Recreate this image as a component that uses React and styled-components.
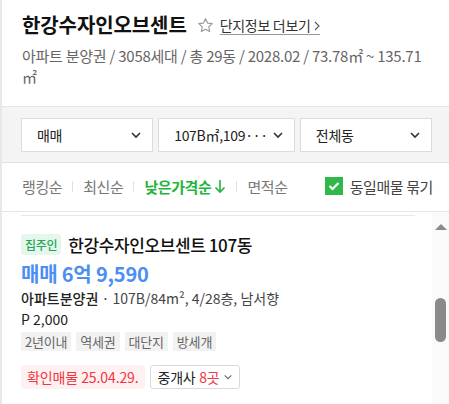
import React from 'react'
import styled, { createGlobalStyle } from 'styled-components'

const GlobalStyle = createGlobalStyle`
  html, body {
    margin: 0;
    padding: 0;
    background: #fff;
  }
  body {
    font-family: "Noto Sans CJK KR", "Noto Sans", sans-serif;
    color: #222;
  }
  * { box-sizing: border-box; }
`

const Page = styled.div`
  width: 449px;
  height: 404px;
  overflow: hidden;
  border-left: 2px solid #e8e8e8;
  display: flex;
  flex-direction: column;
`

const Header = styled.header`
  padding: 10px 20px 0 20px;
  height: 107px;
  border-bottom: 1px solid #e6e6e6;
`

const TitleRow = styled.div`
  display: flex;
  align-items: center;
  gap: 6px;
`

const Title = styled.h2`
  margin: 0;
  font-size: 20px;
  font-weight: 700;
  letter-spacing: -0.1px;
  color: #111;
`

const Star = styled.svg`
  width: 17px;
  height: 17px;
  margin-left: 4px;
  margin-top: 2px;
`

const MoreLink = styled.a`
  font-size: 14px;
  color: #333;
  letter-spacing: -0.3px;
  text-decoration: none;
  border-bottom: 1px solid #999;
  line-height: 17px;
  margin-top: 3px;
  display: flex;
  align-items: center;
  gap: 3px;
`

const Summary = styled.p`
  margin: 6px 0 0;
  font-size: 15px;
  line-height: 21px;
  color: #666;
  letter-spacing: -0.25px;
`

const FilterBar = styled.div`
  background: #f4f4f4;
  border-bottom: 1px solid #e2e2e2;
  padding: 11px 17px 10px 19px;
  display: grid;
  grid-template-columns: repeat(3, 1fr);
  gap: 5px;
`

const Select = styled.div`
  height: 34px;
  background: #fff;
  border: 1px solid #dcdcdc;
  display: flex;
  align-items: center;
  justify-content: space-between;
  gap: 4px;
  padding: 0 10px 0 ${({ $pad }) => $pad}px;
  font-size: 14px;
  color: #222;
  letter-spacing: -0.3px;
  white-space: nowrap;
  span {
    overflow: hidden;
  }
  svg {
    flex-shrink: 0;
  }
`

const SortRow = styled.div`
  height: 48px;
  display: flex;
  align-items: center;
  padding: 0 16px 2px 20px;
`

const SortItem = styled.span`
  font-size: 15px;
  letter-spacing: -0.4px;
  color: ${({ $active }) => ($active ? '#1fb53b' : '#777')};
  font-weight: ${({ $active }) => ($active ? 700 : 400)};
  display: flex;
  align-items: center;
`

const Divider = styled.span`
  width: 1px;
  height: 11px;
  background: #e0e0e0;
  margin: 0 10px;
`

const Bundle = styled.label`
  margin-left: auto;
  display: flex;
  align-items: center;
  gap: 7px;
  font-size: 15px;
  color: #444;
  letter-spacing: -0.4px;
`

const CheckBox = styled.span`
  width: 18px;
  height: 18px;
  background: #30b94a;
  display: flex;
  align-items: center;
  justify-content: center;
`

const ListArea = styled.div`
  flex: 1;
  display: flex;
  border-top: 1px solid #e6e6e6;
`

const ListContent = styled.div`
  flex: 1;
  padding: 3px 17px 0 19px;
`

const PrevEnd = styled.div`
  height: 1px;
  background: #e8e8e8;
`

const Card = styled.div`
  padding-top: 16px;
`

const CardHead = styled.div`
  display: flex;
  align-items: center;
  gap: 7px;
`

const OwnerTag = styled.span`
  background: #e5f6ec;
  color: #26a55a;
  font-size: 12px;
  font-weight: 500;
  border-radius: 3px;
  padding: 0 4px;
  height: 21px;
  display: flex;
  align-items: center;
  letter-spacing: -0.3px;
`

const CardTitle = styled.span`
  font-size: 17px;
  font-weight: 500;
  color: #111;
  letter-spacing: -0.4px;
`

const Price = styled.div`
  margin-top: 4px;
  font-size: 20px;
  font-weight: 700;
  color: #4c8ef1;
  letter-spacing: -0.2px;
  line-height: 26px;
`

const Spec = styled.div`
  font-size: 14px;
  color: #444;
  letter-spacing: 0;
  line-height: 22px;
  b {
    font-weight: 500;
    color: #222;
  }
`

const Premium = styled.div`
  font-size: 14px;
  color: #222;
  line-height: 20px;
  letter-spacing: 0;
`

const Tags = styled.div`
  display: flex;
  gap: 5px;
  margin-top: 3px;
`

const Tag = styled.span`
  background: #f2f2f2;
  color: #666;
  font-size: 13px;
  height: 19px;
  padding: 0 4px;
  display: flex;
  align-items: center;
  letter-spacing: -0.2px;
`

const BottomRow = styled.div`
  display: flex;
  gap: 5px;
  margin-top: 14px;
`

const Confirmed = styled.span`
  background: #fff1f1;
  color: #f2353f;
  font-size: 14px;
  border-radius: 4px;
  height: 24px;
  padding: 0 6px;
  display: flex;
  align-items: center;
  letter-spacing: -0.1px;
`

const Agents = styled.span`
  border: 1px solid #d9d9d9;
  border-radius: 3px;
  height: 24px;
  padding: 0 6px 0 7px;
  display: flex;
  align-items: center;
  gap: 4px;
  font-size: 14px;
  color: #222;
  letter-spacing: -0.3px;
  em {
    font-style: normal;
    color: #f2353f;
  }
`

const Scrollbar = styled.div`
  width: 17px;
  background: #fafafa;
  display: flex;
  flex-direction: column;
  align-items: center;
`

const ArrowUp = styled.span`
  margin-top: 12px;
  width: 0;
  height: 0;
  border-left: 6px solid transparent;
  border-right: 6px solid transparent;
  border-bottom: 6px solid #8a8a8a;
`

const Thumb = styled.span`
  margin-top: 68px;
  width: 11px;
  height: 44px;
  border-radius: 6px;
  background: #8a8a8a;
`

const Chevron = ({ size = 12, color = '#333', stroke = 1.6 }) => (
  <svg width={size} height={size} viewBox="0 0 12 12" fill="none">
    <path d="M2 4l4 4 4-4" stroke={color} strokeWidth={stroke} />
  </svg>
)

const App = () => {
  const sorts = ['랭킹순', '최신순', '낮은가격순', '면적순']
  return (
    <>
      <GlobalStyle />
      <Page>
        <Header>
          <TitleRow>
            <Title>한강수자인오브센트</Title>
            <Star viewBox="0 0 24 24" fill="none">
              <path
                d="M12 2.5l2.9 6.1 6.6.8-4.9 4.6 1.3 6.6L12 17.3l-5.9 3.3 1.3-6.6-4.9-4.6 6.6-.8z"
                stroke="#999"
                strokeWidth="1.6"
                strokeLinejoin="round"
              />
            </Star>
            <MoreLink>
              단지정보 더보기
              <svg width="6" height="10" viewBox="0 0 6 10" fill="none">
                <path d="M1 1l4 4-4 4" stroke="#555" strokeWidth="1.1" />
              </svg>
            </MoreLink>
          </TitleRow>
          <Summary>아파트 분양권 / 3058세대 / 총 29동 / 2028.02 / 73.78㎡ ~ 135.71<wbr />㎡</Summary>
        </Header>

        <FilterBar>
          <Select $pad={15}><span>매매</span><Chevron /></Select>
          <Select $pad={15}><span>107B㎡,109···</span><Chevron /></Select>
          <Select $pad={15}><span>전체동</span><Chevron /></Select>
        </FilterBar>

        <SortRow>
          {sorts.map((s, i) => (
            <React.Fragment key={s}>
              {i > 0 && <Divider />}
              <SortItem $active={i === 2}>
                {s}
                {i === 2 && (
                  <svg width="12" height="16" viewBox="0 0 12 16" fill="none" style={{ marginLeft: 3 }}>
                    <path d="M6 2v12M1.5 9.5L6 14l4.5-4.5" stroke="#1fb53b" strokeWidth="1.6" />
                  </svg>
                )}
              </SortItem>
            </React.Fragment>
          ))}
          <Bundle>
            <CheckBox>
              <svg width="12" height="10" viewBox="0 0 12 10" fill="none">
                <path d="M1.5 5l3 3 6-6" stroke="#fff" strokeWidth="2.2" />
              </svg>
            </CheckBox>
            동일매물 묶기
          </Bundle>
        </SortRow>

        <ListArea>
          <ListContent>
            <PrevEnd />
            <Card>
              <CardHead>
                <OwnerTag>집주인</OwnerTag>
                <CardTitle>한강수자인오브센트 107동</CardTitle>
              </CardHead>
              <Price>매매 6억 9,590</Price>
              <Spec><b>아파트분양권</b> · 107B/84m², 4/28층, 남서향</Spec>
              <Premium>P 2,000</Premium>
              <Tags>
                {['2년이내', '역세권', '대단지', '방세개'].map(t => (
                  <Tag key={t}>{t}</Tag>
                ))}
              </Tags>
              <BottomRow>
                <Confirmed>확인매물 25.04.29.</Confirmed>
                <Agents>
                  중개사 <em>8곳</em>
                  <Chevron size={10} color="#666" stroke={1.3} />
                </Agents>
              </BottomRow>
            </Card>
          </ListContent>
          <Scrollbar>
            <ArrowUp />
            <Thumb />
          </Scrollbar>
        </ListArea>
      </Page>
    </>
  )
}

export default App
